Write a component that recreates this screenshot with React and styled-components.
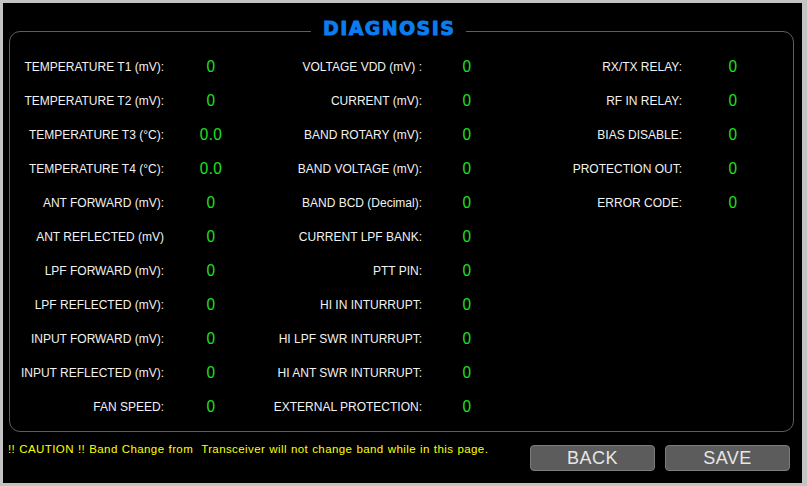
import React from "react";
import styled, { createGlobalStyle } from "styled-components";

const Global = createGlobalStyle`
  html, body { margin: 0; padding: 0; background: #c3c3c3; }
  body { font-family: "Liberation Sans", Arial, sans-serif; }
`;

const Screen = styled.div`
  box-sizing: border-box;
  margin: 3px 5px 0 3px;
  width: 799px;
  height: 480px;
  background: #000;
  padding: 28px 8px 0 6px;
  display: flex;
  flex-direction: column;
`;

const Panel = styled.div`
  position: relative;
  box-sizing: border-box;
  height: 401px;
  border: 1px solid #5e5e5e;
  border-radius: 11px;
  padding: 18px 0 0 0;
`;

const Title = styled.div`
  position: absolute;
  top: -13px;
  left: 301px;
  padding: 0 11px 0 12px;
  background: #000;
  color: #0a7ef0;
  font-family: "DejaVu Sans", Verdana, sans-serif;
  font-weight: 900;
  font-size: 19px;
  line-height: 19px;
  letter-spacing: 1.4px;
  -webkit-text-stroke: 0.9px #0a7ef0;
`;

const Grid = styled.div`
  display: grid;
  grid-template-columns: 154px 94px 164px 90px 170px 102px;
  grid-template-rows: repeat(11, 34px);
`;

const Column = styled.div`
  display: contents;
`;

const Label = styled.div`
  grid-column: ${(p) => p.$col * 2 + 1};
  display: flex;
  align-items: center;
  justify-content: flex-end;
  color: #f2f2f2;
  font-size: 12px;
  white-space: nowrap;
`;

const Value = styled.div`
  grid-column: ${(p) => p.$col * 2 + 2};
  display: flex;
  align-items: center;
  justify-content: center;
  color: #1fe01f;
  font-size: 17px;
  letter-spacing: 0.5px;
  transform: scaleX(0.9);
`;

const Footer = styled.div`
  display: flex;
  justify-content: space-between;
  align-items: flex-start;
  padding: 8px 4px 0 0;
  margin-left: -1px;
`;

const Caution = styled.div`
  color: #ffff00;
  font-size: 11.5px;
  letter-spacing: 0.4px;
  word-spacing: 0.5px;
  padding-top: 3px;
  white-space: pre;
`;

const Buttons = styled.div`
  display: flex;
  gap: 10px;
  padding-top: 5px;
`;

const Button = styled.button`
  box-sizing: border-box;
  width: 125px;
  height: 26px;
  background: #5c5c5c;
  border: 1px solid #7c7c7c;
  border-radius: 4px;
  color: #e6e6e6;
  font-family: "Liberation Sans", Arial, sans-serif;
  font-size: 18px;
  letter-spacing: 0.5px;
  line-height: 24px;
  padding: 0;
`;

const col1 = [
  ["TEMPERATURE T1 (mV):", "0"],
  ["TEMPERATURE T2 (mV):", "0"],
  ["TEMPERATURE T3 (°C):", "0.0"],
  ["TEMPERATURE T4 (°C):", "0.0"],
  ["ANT FORWARD (mV):", "0"],
  ["ANT REFLECTED (mV)", "0"],
  ["LPF FORWARD (mV):", "0"],
  ["LPF REFLECTED (mV):", "0"],
  ["INPUT FORWARD (mV):", "0"],
  ["INPUT REFLECTED (mV):", "0"],
  ["FAN SPEED:", "0"],
];
const col2 = [
  ["VOLTAGE VDD (mV) :", "0"],
  ["CURRENT (mV):", "0"],
  ["BAND ROTARY (mV):", "0"],
  ["BAND VOLTAGE (mV):", "0"],
  ["BAND BCD (Decimal):", "0"],
  ["CURRENT LPF BANK:", "0"],
  ["PTT PIN:", "0"],
  ["HI IN INTURRUPT:", "0"],
  ["HI LPF SWR INTURRUPT:", "0"],
  ["HI ANT SWR INTURRUPT:", "0"],
  ["EXTERNAL PROTECTION:", "0"],
];
const col3 = [
  ["RX/TX RELAY:", "0"],
  ["RF IN RELAY:", "0"],
  ["BIAS DISABLE:", "0"],
  ["PROTECTION OUT:", "0"],
  ["ERROR CODE:", "0"],
];

export default function App() {
  const cols = [col1, col2, col3];
  return (
    <>
      <Global />
      <Screen>
        <Panel>
          <Title>DIAGNOSIS</Title>
          <Grid>
            {cols.map((c, ci) => (
              <Column key={ci}>
                {c.map(([l, v], ri) => (
                  <React.Fragment key={ri}>
                    <Label $col={ci} style={{ gridRow: ri + 1 }}>{l}</Label>
                    <Value $col={ci} style={{ gridRow: ri + 1 }}>{v}</Value>
                  </React.Fragment>
                ))}
              </Column>
            ))}
          </Grid>
        </Panel>
        <Footer>
          <Caution>!! CAUTION !! Band Change from  Transceiver will not change band while in this page.</Caution>
          <Buttons>
            <Button>BACK</Button>
            <Button>SAVE</Button>
          </Buttons>
        </Footer>
      </Screen>
    </>
  );
}
